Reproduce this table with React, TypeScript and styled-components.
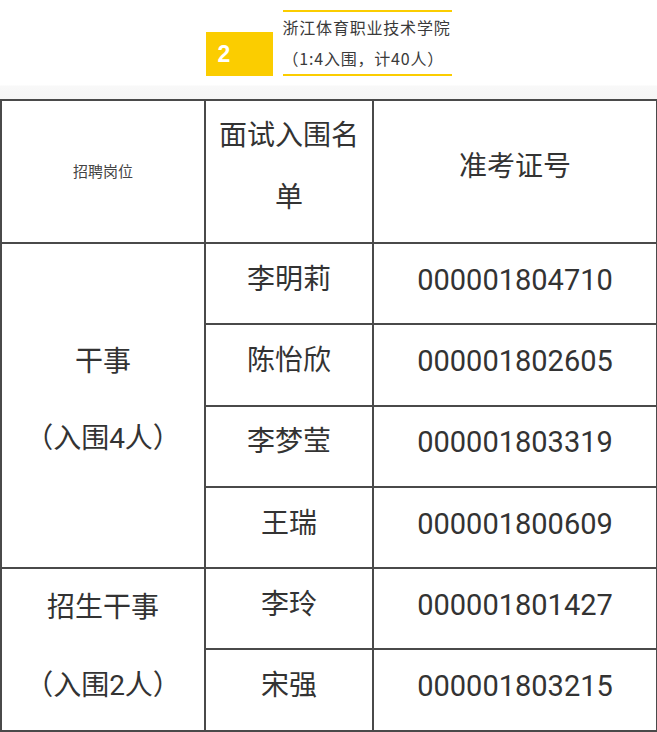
import styled, { createGlobalStyle } from 'styled-components';

const GlobalStyle = createGlobalStyle`
  body {
    margin: 0;
    background: #ffffff;
    font-family: Roboto, "Noto Sans CJK SC", sans-serif;
    color: #333333;
  }
`;

const Page = styled.div`
  width: 657px;
`;

const Banner = styled.div`
  display: flex;
  justify-content: center;
  align-items: flex-end;
  gap: 10px;
  box-sizing: border-box;
  padding-top: 10px;
  height: 76px;
`;

const NumberBadge = styled.div`
  width: 67px;
  height: 44px;
  box-sizing: border-box;
  padding-left: 12px;
  display: flex;
  align-items: center;
  background: #fbcd00;
  color: #ffffff;
  font-family: "Liberation Sans", Arial, sans-serif;
  font-weight: 700;
  font-size: 23px;
`;

const SchoolBlock = styled.div`
  width: 169px;
  border-top: 2px solid #fbcd00;
  border-bottom: 2px solid #fbcd00;
  font-family: "Noto Sans CJK SC", sans-serif;
  font-size: 16px;
  line-height: 31px;
  letter-spacing: 0.8px;
  color: #3a3a3a;
  white-space: nowrap;
`;

const Gap = styled.div`
  height: 23px;
  background: linear-gradient(#ffffff 0, #ffffff 9px, #f8f8f8 10px, #f6f6f6 100%);
`;

const Table = styled.table`
  width: 656px;
  table-layout: fixed;
  border-collapse: collapse;
`;

const HeadRow = styled.tr`
  height: 143px;
`;

const Row = styled.tr`
  height: 81.3px;
`;

const HeadCell = styled.td<{ $small?: boolean }>`
  padding: 0 8px ${p => (p.$small ? '0' : '10px')};
  border: 2px solid #4a4a4a;
  text-align: center;
  vertical-align: middle;
  font-size: ${p => (p.$small ? '15px' : '28px')};
  line-height: ${p => (p.$small ? '20px' : '62px')};
  color: ${p => (p.$small ? '#444444' : '#333333')};
`;

const Cell = styled.td<{ $mono?: boolean }>`
  padding: 0 0 8px;
  border: 2px solid #4a4a4a;
  text-align: center;
  vertical-align: middle;
  font-size: ${p => (p.$mono ? '29px' : '28px')};
  line-height: 40px;
  color: #333333;
`;

const GroupCell = styled.td<{ $spacing: number; $lift: number }>`
  padding: 0 0 ${p => p.$lift}px;
  border: 2px solid #4a4a4a;
  text-align: center;
  vertical-align: middle;
  font-size: 28px;
  line-height: ${p => p.$spacing}px;
  color: #333333;
`;

const groups = [
  {
    title: '干事',
    quota: '（入围4人）',
    spacing: 77,
    lift: 12,
    people: [
      ['李明莉', '000001804710'],
      ['陈怡欣', '000001802605'],
      ['李梦莹', '000001803319'],
      ['王瑞', '000001800609'],
    ],
  },
  {
    title: '招生干事',
    quota: '（入围2人）',
    spacing: 78,
    lift: 4,
    people: [
      ['李玲', '000001801427'],
      ['宋强', '000001803215'],
    ],
  },
];

export default function App() {
  return (
    <Page>
      <GlobalStyle />
      <Banner>
        <NumberBadge>2</NumberBadge>
        <SchoolBlock>
          <div>浙江体育职业技术学院</div>
          <div>（1:4入围，计40人）</div>
        </SchoolBlock>
      </Banner>
      <Gap />
      <Table>
        <colgroup>
          <col style={{ width: 204 }} />
          <col style={{ width: 168 }} />
          <col style={{ width: 284 }} />
        </colgroup>
        <tbody>
          <HeadRow>
            <HeadCell $small>招聘岗位</HeadCell>
            <HeadCell>面试入围名单</HeadCell>
            <HeadCell>准考证号</HeadCell>
          </HeadRow>
          {groups.map(g =>
            g.people.map(([name, id], i) => (
              <Row key={id}>
                {i === 0 && (
                  <GroupCell rowSpan={g.people.length} $spacing={g.spacing} $lift={g.lift}>
                    <div>{g.title}</div>
                    <div>{g.quota}</div>
                  </GroupCell>
                )}
                <Cell>{name}</Cell>
                <Cell $mono>{id}</Cell>
              </Row>
            ))
          )}
        </tbody>
      </Table>
    </Page>
  );
}
